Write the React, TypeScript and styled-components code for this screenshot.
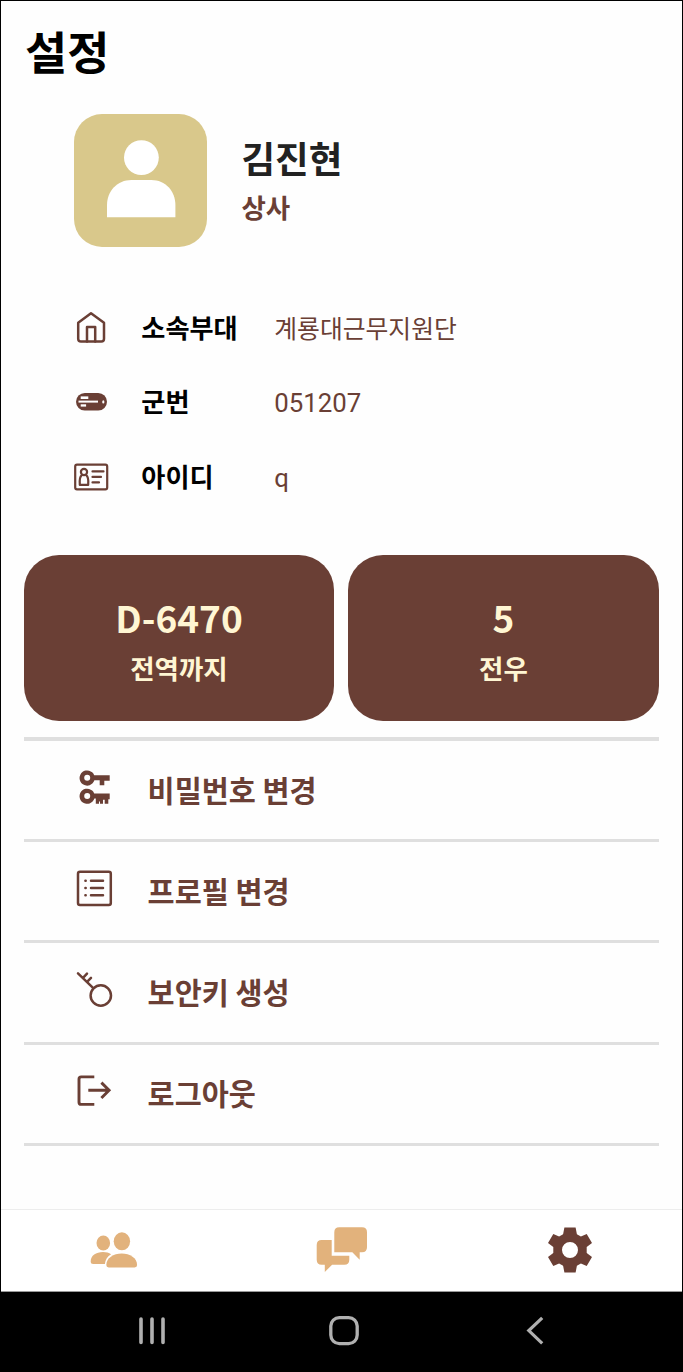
import React from "react";
import styled, { createGlobalStyle } from "styled-components";

const BROWN = "#6a3f35";
const CREAM = "#fff6d3";
const TAN = "#e2b27c";

const GlobalStyle = createGlobalStyle`
  body { margin: 0; background: #fff; }
  * { box-sizing: border-box; }
  svg { display: block; flex: none; }
`;

const Screen = styled.div`
  width: 683px;
  height: 1372px;
  display: flex;
  flex-direction: column;
  border: 1px solid #000;
  background: #fefefe;
  overflow: hidden;
  font-family: "Noto Sans CJK KR", sans-serif;
  white-space: nowrap;
`;

const Content = styled.main`
  flex: 1;
  padding: 0 23px;
`;

const Title = styled.h1`
  margin: 0;
  padding-left: 1px;
  height: 98px;
  line-height: 98px;
  font-size: 45.8px;
  font-weight: 700;
  color: #000;
`;

const Profile = styled.section`
  display: flex;
  gap: 34px;
  margin: 15.3px 0 42.2px 50.4px;
  height: 133px;
`;

const Avatar = styled.div`
  width: 133px;
  height: 133px;
  border-radius: 28px;
  background: #d9c88b;
`;

const ProfileText = styled.div`
  padding-top: 16px;
`;

const Name = styled.div`
  font-size: 36.6px;
  line-height: 56px;
  font-weight: 700;
  color: #222;
`;

const Rank = styled.div`
  font-size: 26.5px;
  line-height: 42px;
  font-weight: 700;
  color: ${BROWN};
`;

const InfoRow = styled.div`
  display: flex;
  align-items: center;
  height: 74.5px;
  padding-left: 48px;
`;

const InfoLabel = styled.div`
  width: 133px;
  margin-left: 29.3px;
  font-size: 26.2px;
  font-weight: 700;
  color: #000;
`;

const InfoValue = styled.div<{ $latin?: boolean }>`
  font-family: ${(p) => (p.$latin ? 'Roboto, "Noto Sans CJK KR"' : '"Noto Sans CJK KR"')}, sans-serif;
  font-size: ${(p) => (p.$latin ? 25.8 : 24.8)}px;
  padding-top: ${(p) => (p.$latin ? 4 : 0)}px;
  color: ${BROWN};
`;

const Cards = styled.section`
  display: grid;
  grid-template-columns: 310px 1fr;
  gap: 14px;
  margin-top: 42px;
`;

const Card = styled.div`
  height: 166px;
  padding-top: 34px;
  border-radius: 35px;
  background: ${BROWN};
  color: ${CREAM};
  text-align: center;
`;

const CardValue = styled.div`
  font-size: 37px;
  line-height: 57px;
  font-weight: 700;
`;

const CardLabel = styled.div`
  font-size: 26.5px;
  line-height: 44px;
  font-weight: 700;
`;

const Menu = styled.nav`
  margin-top: 16px;
  border-top: 4px solid #dfdfdf;
`;

const MenuItem = styled.div`
  display: flex;
  align-items: center;
  gap: 33.6px;
  height: 101.25px;
  padding: 0 0 3px 50px;
  border-bottom: 3px solid #dfdfdf;
  font-size: 29.4px;
  font-weight: 700;
  color: ${BROWN};
`;

const TabBar = styled.nav`
  display: flex;
  height: 82px;
  padding-bottom: 1px;
  border-top: 1px solid #ededed;
  background: #fff;
`;

const Tab = styled.div`
  flex: 1;
  display: flex;
  align-items: center;
  justify-content: center;
`;

const SystemBar = styled.div`
  display: flex;
  height: 80px;
  padding-left: 55.5px;
  border-top: 1px solid #999;
  background: #000;
`;

const SystemKey = styled.div`
  width: 191.5px;
  display: flex;
  align-items: center;
  justify-content: center;
  padding-bottom: 2px;
`;

const Icon = ({ children, w = 2.2 }: { children: React.ReactNode; w?: number }) => (
  <svg width="40" height="40" viewBox="0 0 40 40" fill="none" stroke={BROWN} strokeWidth={w} strokeLinecap="round" strokeLinejoin="round">
    {children}
  </svg>
);

const HouseIcon = () => (
  <Icon w={2.5}>
    <path d="M19 6.2 6.2 15.8V31.8Q6.2 34.6 9 34.6H29.3Q32 34.6 32 31.8V15.8Z" />
    <path d="M15 34.5V20H23.2V34.5" />
  </Icon>
);

const TagIcon = () => (
  <Icon>
    <rect x="4" y="12" width="31" height="17.5" rx="8.75" fill={BROWN} stroke="none" />
    <g fill="#fff" stroke="none">
      <rect x="8.7" y="15.4" width="7.6" height="2.6" />
      <rect x="6.5" y="19.6" width="19.5" height="2" />
      <rect x="8.7" y="23.3" width="5.4" height="2.3" />
      <ellipse cx="31.3" cy="20.9" rx="1.1" ry="1.7" />
    </g>
  </Icon>
);

const IdCardIcon = () => (
  <Icon w={2.2}>
    <rect x="3.2" y="8.7" width="32" height="24.6" rx="1.8" />
    <circle cx="12" cy="16" r="3.1" />
    <path d="M9.8 19.2C7.4 21 7.4 24 7.8 28.8H16.2C16.6 24 16.6 21 14.2 19.2" />
    <path d="M20.5 15.4H31.5M20.5 20.9H29M20.5 26.4H27" />
  </Icon>
);

const KeysIcon = () => (
  <Icon>
    <g fill={BROWN} stroke="none">
      <path fillRule="evenodd" d="M20.2 6.2H35.7V11.8H30.3V16.3H25.7V11.3H20.4A7.6 7.6 0 1 1 20.2 6.2ZM13.2 5.8A3 3 0 1 0 13.2 11.8A3 3 0 1 0 13.2 5.8Z" />
      <path fillRule="evenodd" d="M20.2 24.4H35.7V30.2H34.3V34.7H30.7V30.8H29V34.7H26V32.5H25V34.7H21.8V29.5H20.4A7.6 7.6 0 1 1 20.2 24.4ZM13.2 24.1A3 3 0 1 0 13.2 30.1A3 3 0 1 0 13.2 24.1Z" />
    </g>
  </Icon>
);

const ListIcon = () => (
  <Icon w={2.5}>
    <rect x="4" y="1.8" width="32.8" height="33.2" rx="2" />
    <path d="M17 10.7H29M17 18H29M17 25.3H29M11.4 10.7h.3M11.4 18h.3M11.4 25.3h.3" />
  </Icon>
);

const KeyIcon = () => (
  <Icon w={2.5}>
    <circle cx="26.8" cy="24.5" r="10.2" />
    <path d="M4 2.3 19.3 17.1M9 6.8 13 2.6M13.3 10.7 17 6.9" />
  </Icon>
);

const LogoutIcon = () => (
  <Icon w={2.9}>
    <path strokeLinecap="butt" d="M20.3 4.9H7.2Q5 4.9 5 7.1V30.2Q5 32.4 7.2 32.4H20.3" />
    <path strokeLinecap="butt" strokeLinejoin="miter" d="M14.3 18.3H35M27.4 10.6 35.1 18.3 27.4 26" />
  </Icon>
);

const PeopleIcon = () => (
  <svg width="56" height="56" viewBox="0.5 0 56 56" fill={TAN}>
    <ellipse cx="16.8" cy="21" rx="6.8" ry="7.5" />
    <path d="M4.2 39.5C4.2 33.5 9.5 30 16.5 30C19.8 30 22.5 30.8 24.6 32.2C21 34.3 18.8 37.6 18.4 42H6.7Q4.2 42 4.2 39.5Z" />
    <ellipse cx="35.4" cy="19.3" rx="8.2" ry="9" />
    <path d="M19.8 43C19.8 36 27 31.4 35.2 31.4S50.6 36 50.6 43Q50.6 45.4 48.2 45.4H22.2Q19.8 45.4 19.8 43Z" />
  </svg>
);

const ChatIcon = () => (
  <svg width="56" height="56" viewBox="0.5 0 56 56" fill={TAN}>
    <path d="M25.8 5.3H48.5Q53.5 5.3 53.5 10.3V25.3Q53.5 30.3 48.5 30.3H46.2V37.7L38.8 30.3H20.8V10.3Q20.8 5.3 25.8 5.3Z" />
    <path d="M8.2 18H18.2V33.7H35.8V37.7Q35.8 42.7 30.8 42.7H18.6L11.3 50V42.7H8.2Q3.2 42.7 3.2 37.7V23Q3.2 18 8.2 18Z" />
  </svg>
);

const GearIcon = () => (
  <svg width="56" height="56" viewBox="-29 -28 56 56" fill={BROWN}>
    <path
      fillRule="evenodd"
      d="M-5.6-22.5H5.6L6.9-15.8 10.9-13.6 16.7-16 22-6.9 16.7-2.9V2.9L22 6.9 16.7 16 10.9 13.6 6.9 15.8 5.6 22.5H-5.6L-6.9 15.8-10.9 13.6-16.7 16-22 6.9-16.7 2.9V-2.9L-22-6.9-16.7-16-10.9-13.6-6.9-15.8ZM0-8A8 8 0 1 0 0 8A8 8 0 1 0 0-8Z"
    />
  </svg>
);

const info = [
  { icon: <HouseIcon />, label: "소속부대", value: "계룡대근무지원단" },
  { icon: <TagIcon />, label: "군번", value: "051207", latin: true },
  { icon: <IdCardIcon />, label: "아이디", value: "q", latin: true },
];

const menu = [
  { icon: <KeysIcon />, label: "비밀번호 변경" },
  { icon: <ListIcon />, label: "프로필 변경" },
  { icon: <KeyIcon />, label: "보안키 생성" },
  { icon: <LogoutIcon />, label: "로그아웃" },
];

export default function App() {
  return (
    <>
      <GlobalStyle />
      <Screen>
        <Content>
          <Title>설정</Title>
          <Profile>
            <Avatar>
              <svg width="133" height="133" viewBox="0 0 133 133" fill="#fff">
                <circle cx="67.4" cy="43.6" r="17.4" />
                <path d="M33 103.2V91C33 77 43.4 66 57.4 66H77.4C91.4 66 101.4 77 101.4 91V103.2Z" />
              </svg>
            </Avatar>
            <ProfileText>
              <Name>김진현</Name>
              <Rank>상사</Rank>
            </ProfileText>
          </Profile>
          {info.map((row) => (
            <InfoRow key={row.label}>
              {row.icon}
              <InfoLabel>{row.label}</InfoLabel>
              <InfoValue $latin={row.latin}>{row.value}</InfoValue>
            </InfoRow>
          ))}
          <Cards>
            <Card>
              <CardValue>D-6470</CardValue>
              <CardLabel>전역까지</CardLabel>
            </Card>
            <Card>
              <CardValue>5</CardValue>
              <CardLabel>전우</CardLabel>
            </Card>
          </Cards>
          <Menu>
            {menu.map((item) => (
              <MenuItem key={item.label}>
                {item.icon}
                <span>{item.label}</span>
              </MenuItem>
            ))}
          </Menu>
        </Content>
        <TabBar>
          <Tab><PeopleIcon /></Tab>
          <Tab><ChatIcon /></Tab>
          <Tab><GearIcon /></Tab>
        </TabBar>
        <SystemBar>
          <SystemKey>
            <svg width="40" height="32" viewBox="0 0 40 32" stroke="#b0b0b0" strokeWidth="3.6" strokeLinecap="round">
              <path d="M9 4V27.5M20 4V27.5M31 4V27.5" />
            </svg>
          </SystemKey>
          <SystemKey>
            <svg width="40" height="32" viewBox="0 0 40 32" fill="none" stroke="#b0b0b0" strokeWidth="3.3">
              <rect x="6.8" y="2.6" width="26.4" height="26" rx="8.5" />
            </svg>
          </SystemKey>
          <SystemKey>
            <svg width="40" height="32" viewBox="0 0 40 32" fill="none" stroke="#b0b0b0" strokeWidth="3.2">
              <path d="M27.2 2.8 13.8 15.6 27.2 28.4" />
            </svg>
          </SystemKey>
        </SystemBar>
      </Screen>
    </>
  );
}
